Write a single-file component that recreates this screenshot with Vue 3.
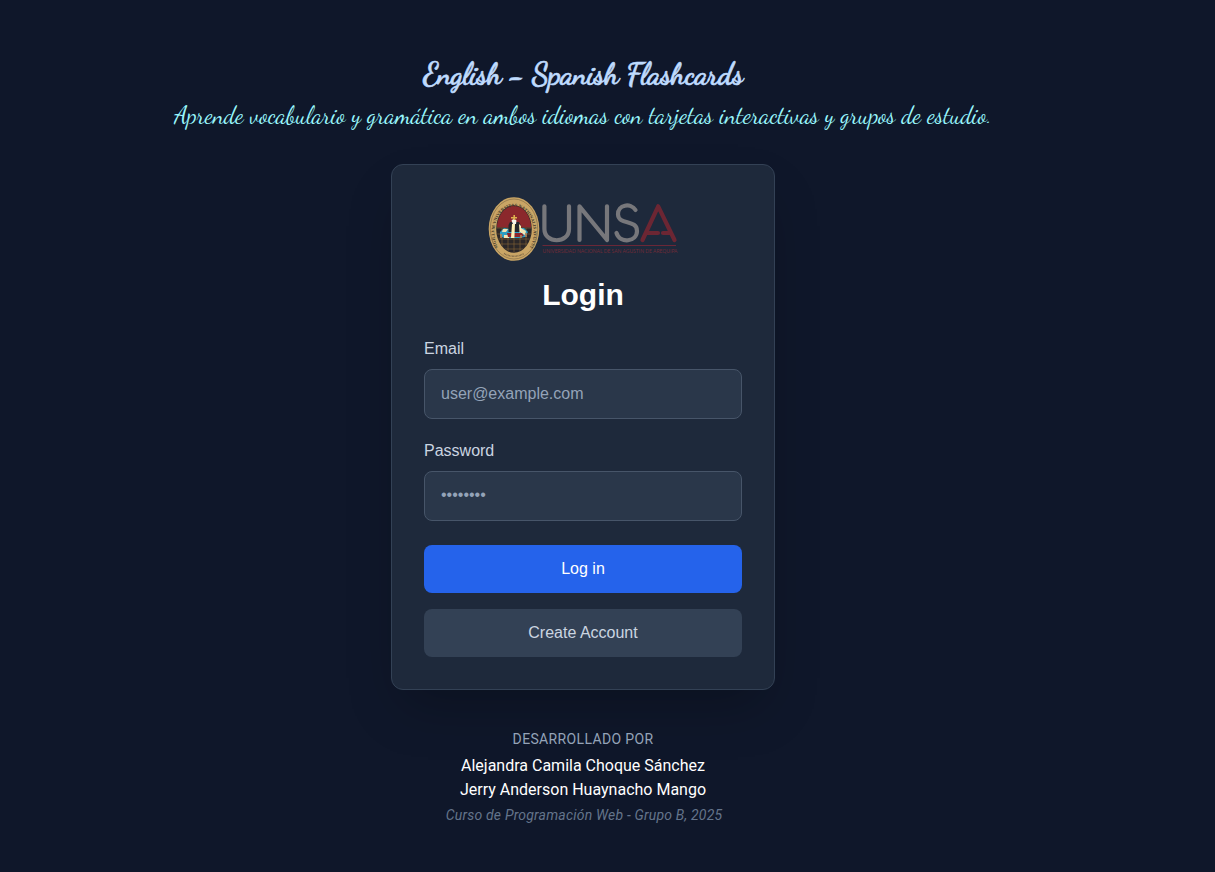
<script setup>
const authors = ['Alejandra Camila Choque Sánchez', 'Jerry Anderson Huaynacho Mango']
</script>

<template>
  <div class="page">
    <header class="hero">
      <h1>English <span class="dash">–</span> Spanish Flashcards</h1>
      <p>Aprende vocabulario y gramática en ambos idiomas con tarjetas interactivas y grupos de estudio.</p>
    </header>

    <main class="card">
      <svg class="logo" viewBox="0 0 192 64" aria-label="UNSA">
        <defs>
          <path id="sealArc" d="M10 50.5 A19.6 26 0 1 1 42 50.5" />
          <clipPath id="sealClip"><ellipse cx="26" cy="32" rx="17.2" ry="23.2" /></clipPath>
        </defs>
        <ellipse cx="26" cy="32" rx="25.3" ry="31.8" fill="#c9a565" />
        <ellipse cx="26" cy="32" rx="23.7" ry="30" fill="none" stroke="#6e5a3c" stroke-width=".5" />
        <ellipse cx="26" cy="32" rx="17.8" ry="23.8" fill="#2b2728" />
        <g clip-path="url(#sealClip)">
          <rect x="8" y="8" width="36" height="22.5" fill="#8b282c" />
          <path d="M8 31H44M8 37H44M8 42H44M8 47H44M8 52H44M26 31V57M20 31V57M14 31V56M32 31V57M38 31V56" fill="none" stroke="#866737" stroke-width=".6" />
        </g>
        <path d="M12 35 16 31 21 32 25 31 36 31 40 35 37 40 31 41 16 41 12 39Z" fill="#2b9fc4" />
        <path d="M15 32H20L18 35H14ZM33 31 38 34 37 38 33 36ZM16 38H21V41H16Z" fill="#f1e5b4" />
        <path d="M19 36H34L36 39 31 40H20Z" fill="#8d252c" />
        <path d="M20.5 33V28L22 25H31L33 29V35H20.5Z" fill="#24262c" />
        <path d="M24 27H27L26.4 41H23ZM31 27 33 29V35L31.6 36Z" fill="#fff0b7" />
        <path d="M23.5 23.5 26 21.5 28.5 23.5 28 27H25Z" fill="#f5f4ec" />
        <path d="M25.4 18H27V20H29V21.5H27V23H25.4V21.5H23V20H25.4Z" fill="#ddb24e" />
        <path d="M13 37V41M38 36V40M33 38V41" stroke="#b98153" stroke-width="1.6" />
        <text class="seal" font-size="4.4" fill="#40372a"><textPath href="#sealArc" textLength="110" lengthAdjust="spacingAndGlyphs">SIGILLVM VNIVERSITAS NATIONALIS AVGVSTINI</textPath></text>
        <path d="M16 56.5Q26 62 36 56.5" fill="none" stroke="#796344" stroke-width="1.5" stroke-dasharray=".8 .6" />
        <g fill="none" stroke-linecap="round" stroke-linejoin="round" stroke-width="4.2">
          <path d="M56.4 9.3V32C56.4 47 81 47 81 32V9.3M91.5 43V9.3L119 43V9.3M147.5 13C143 5.5 129.5 7.5 130 17.5C130.5 28.5 149 22 149 34C149 45 132 47 128.5 36" stroke="#77777b" />
          <path d="M154.5 43 170.2 9.3 186.5 43M160 36H170M175 36H182" stroke="#6c2633" />
        </g>
        <path d="M54.5 48.5H188" stroke="#6b2737" stroke-width="1" />
        <text class="name" x="54.5" y="56" font-size="4.9" fill="#702b38" textLength="135" lengthAdjust="spacingAndGlyphs">UNIVERSIDAD NACIONAL DE SAN AGUSTIN DE AREQUIPA</text>
      </svg>
      <h2>Login</h2>
      <form @submit.prevent>
        <div class="field">
          <label for="email">Email</label>
          <input id="email" type="email" placeholder="user@example.com">
        </div>
        <div class="field">
          <label for="password">Password</label>
          <input id="password" type="password" placeholder="••••••••">
        </div>
        <div class="actions">
          <button class="primary" type="submit">Log in</button>
          <button class="secondary" type="button">Create Account</button>
        </div>
      </form>
    </main>

    <footer>
      <p class="credit">DESARROLLADO POR</p>
      <p v-for="author in authors" :key="author" class="author">{{ author }}</p>
      <p class="course">Curso de Programación Web - Grupo B, 2025</p>
    </footer>
  </div>
</template>

<style>
body { margin: 0; background: #0f172a; }
</style>

<style scoped>
* { box-sizing: border-box; }
.page { height: 872px; width: 1166px; display: flex; flex-direction: column; align-items: center; padding-top: 56px; color: #fff; font-family: "Liberation Sans", Arial, sans-serif; overflow: hidden; }
h1, h2, p { margin: 0; }
.hero { text-align: center; font-family: "Dancing Script", cursive; white-space: nowrap; height: 108px; }
.hero h1 { color: #bfdbfe; font-size: 30px; line-height: 36px; font-weight: 700; letter-spacing: -.38px; -webkit-text-stroke: .6px #bfdbfe; }
.dash { display: inline-block; transform: scaleX(.7); margin: 0 -3.4px; }
.hero p { color: #99f6fc; font-size: 24px; line-height: 32px; margin-top: 8px; }
.card { width: 384px; height: 526px; border: 1px solid #334155; border-radius: 12px; background: #1e293b; padding: 32px; box-shadow: 0 25px 50px -12px rgba(0, 0, 0, .25); display: flex; flex-direction: column; align-items: center; }
.logo { width: 192px; height: 64px; flex: none; overflow: visible; margin-left: 1px; }
.seal { font-family: "Liberation Serif", serif; font-weight: 700; }
.name { font-family: Lato, sans-serif; }
h2 { font-size: 30px; line-height: 36px; margin-top: 16px; }
form { width: 100%; margin-top: 24px; }
.field { margin-bottom: 20px; }
label { display: block; font-size: 16px; line-height: 24px; color: #cbd5e1; margin-bottom: 8px; }
input { display: block; width: 100%; height: 50px; padding: 12px 16px; border: 1px solid #475569; border-radius: 8px; background: #2a374a; color: #fff; font: 16px "Liberation Sans", Arial, sans-serif; outline: none; }
input::placeholder { color: #94a3b8; opacity: 1; }
#password { padding-bottom: 14px; }
.actions { display: flex; flex-direction: column; gap: 16px; padding-top: 4px; }
button { height: 48px; border: 0; border-radius: 8px; font: 16px "Liberation Sans", Arial, sans-serif; padding: 0; }
.primary { background: #2563eb; color: #fff; }
.secondary { background: #334155; color: #cbd5e1; }
footer { margin-top: 39px; text-align: center; font-family: Roboto, sans-serif; }
.credit { font-size: 14px; line-height: 20px; letter-spacing: .35px; color: #94a3b8; margin-bottom: 5px; }
.author { font-size: 16px; line-height: 24px; }
.course { font-size: 14px; line-height: 20px; color: #64748b; font-style: italic; margin-top: 3px; letter-spacing: .2px; padding-left: 2px; }
</style>
